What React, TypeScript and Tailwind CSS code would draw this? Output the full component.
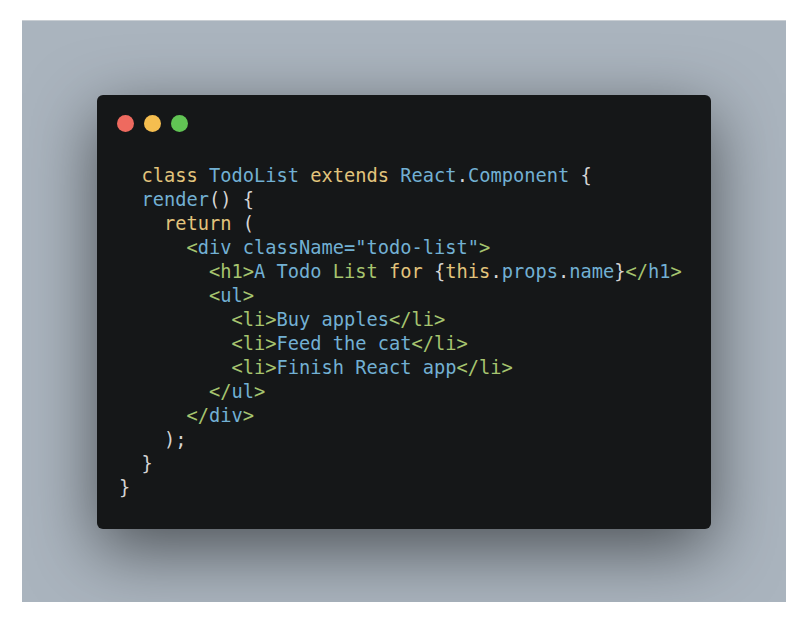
import React from "react";

const G = "text-[#a6c46f]"; // green
const B = "text-[#72b0d3]"; // blue
const Y = "text-[#e2c47c]"; // yellow
const W = "text-[#d4d4d4]"; // white

type Seg = [string, string];

const lines: Seg[][] = [
  [["  ", W], ["class", Y], [" ", W], ["TodoList", B], [" ", W], ["extends", Y], [" ", W], ["React", B], [".", W], ["Component", B], [" {", W]],
  [["  ", W], ["render", B], ["() {", W]],
  [["    ", W], ["return", Y], [" (", W]],
  [["      ", W], ["<", G], ["div", B], [" className=\"todo-list\"", B], [">", G]],
  [["        ", W], ["<h1>", G], ["A Todo ", B], ["List", G], [" ", W], ["for", Y], [" {", W], ["this", Y], [".", W], ["props", B], [".", W], ["name", B], ["}", W], ["</", G], ["h1", B], [">", G]],
  [["        ", W], ["<", G], ["ul", B], [">", G]],
  [["          ", W], ["<li>", G], ["Buy apples", B], ["</li>", G]],
  [["          ", W], ["<li>", G], ["Feed the cat", B], ["</li>", G]],
  [["          ", W], ["<li>", G], ["Finish React app", B], ["</li>", G]],
  [["        ", W], ["</", G], ["ul", B], [">", G]],
  [["      ", W], ["</", G], ["div", B], [">", G]],
  [["    );", W]],
  [["  }", W]],
  [["}", W]],
];

export default function App() {
  return (
    <div className="w-[800px] h-[618px] bg-white pt-[20px] pl-[22px]">
      <div className="w-[764px] h-[582px] overflow-hidden bg-[#aab4be] pt-[74px] pl-[75px] border-t border-[#c9ced3]">
        <div className="w-[614px] h-[434px] bg-[#151718] rounded-[6px] shadow-[0_20px_68px_rgba(0,0,0,0.55)] pt-[20px] pl-[20px]">
          <div className="flex gap-[10px]">
            <div className="w-[17px] h-[17px] rounded-full bg-[#ee6a5f]" />
            <div className="w-[17px] h-[17px] rounded-full bg-[#f5be4f]" />
            <div className="w-[17px] h-[17px] rounded-full bg-[#61c454]" />
          </div>
          <pre
            className="mt-[32px] ml-[2px] text-[18.7px] leading-[24px]"
            style={{ fontFamily: '"DejaVu Sans Mono", monospace' }}
          >
            {lines.map((segs, i) => (
              <div key={i}>
                {segs.map(([t, c], j) => (
                  <span key={j} className={c}>
                    {t}
                  </span>
                ))}
              </div>
            ))}
          </pre>
        </div>
      </div>
    </div>
  );
}
